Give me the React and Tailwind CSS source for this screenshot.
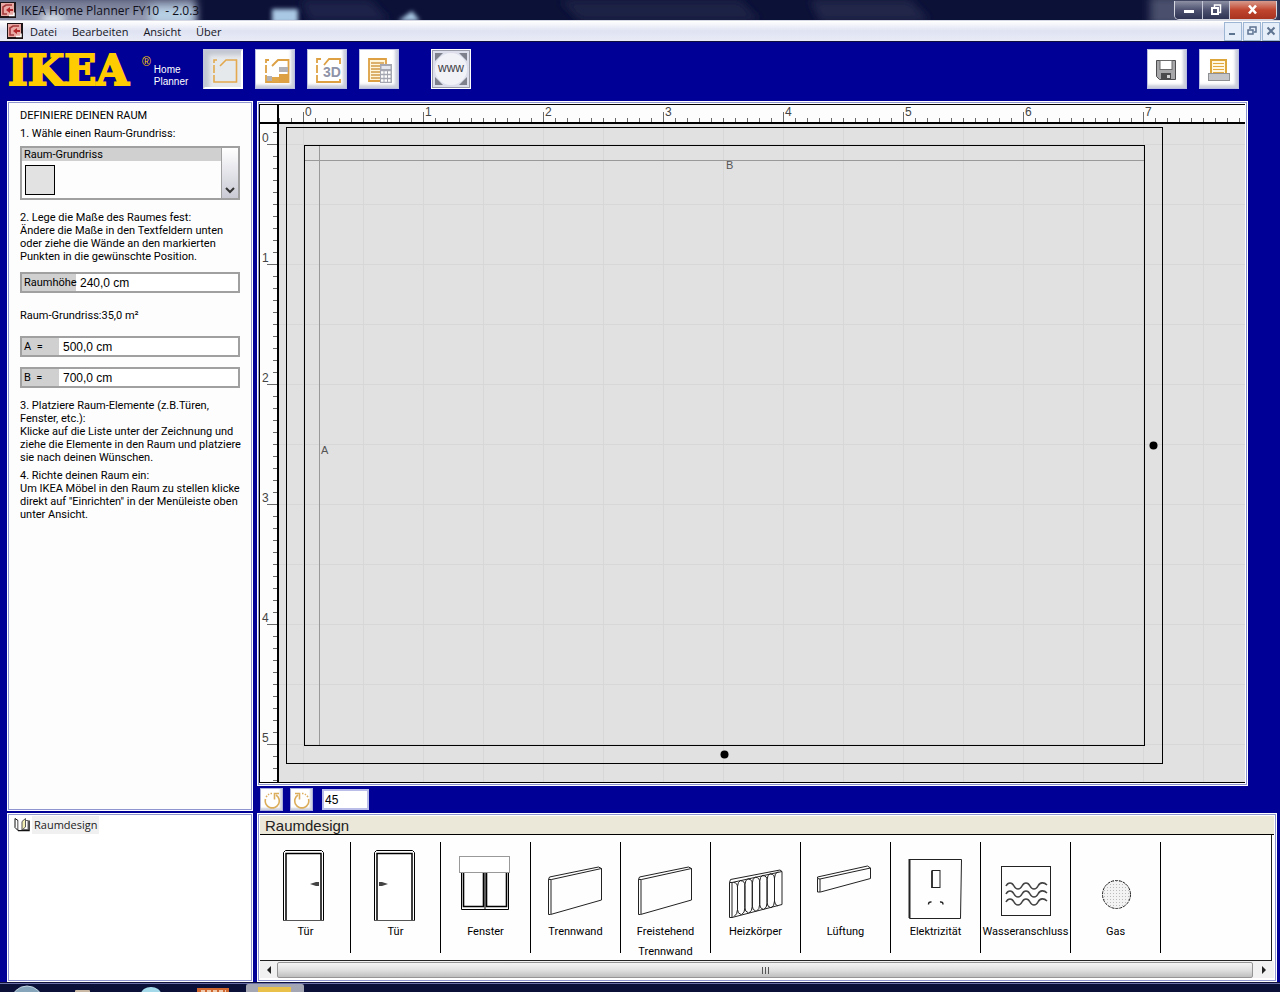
import React, { useState } from "react";

const PANEL = "border border-white bg-[#8f96cf] p-px";
const METRES = [0, 1, 2, 3, 4, 5, 6, 7];

function AppIcon() {
  return (
    <svg width="16" height="16" viewBox="0 0 16 16" className="shrink-0" aria-hidden="true">
      <rect width="16" height="16" fill="#1c1416" />
      <rect x="1" y="1" width="13" height="13" fill="#e9a9a4" />
      <path d="M12 3H6L3 5v7h4" fill="none" stroke="#a3383a" strokeWidth="1.600" />
      <path d="M6 8l4-3v2h3v2h-3v2z" fill="#b3282b" />
      <path d="M9 13.500h5v-3" fill="none" stroke="#fff" strokeWidth="1.500" />
    </svg>
  );
}

function TitleBar() {
  return (
    <header className="relative flex h-[21px] shrink-0 items-center overflow-hidden border-b border-[#d5d7e2] bg-[#0c1137]">
      <svg className="absolute inset-0 h-full w-full" aria-hidden="true">
        <defs>
          <filter id="soft" x="-50%" y="-50%" width="200%" height="200%">
            <feGaussianBlur stdDeviation="4" />
          </filter>
          <filter id="soft2" x="-50%" y="-50%" width="200%" height="200%">
            <feGaussianBlur stdDeviation="2" />
          </filter>
          <linearGradient id="glass" x1="0" y1="0" x2="0" y2="1">
            <stop offset="0" stopColor="#686d88" />
            <stop offset="1" stopColor="#a3a9bf" />
          </linearGradient>
        </defs>
        <rect x="-10" y="-4" width="206" height="30" fill="url(#glass)" filter="url(#soft)" />
        <rect x="42" y="14" width="22" height="10" fill="#e2ebf2" filter="url(#soft)" />
        <rect x="150" y="6" width="44" height="18" fill="#b7d0e4" filter="url(#soft)" />
        <path d="M300 0h70l20 21h-80z" fill="#1c2248" filter="url(#soft)" />
        <path d="M560 0h180l20 21H580z" fill="#1b2044" filter="url(#soft)" />
        <path d="M810 0h100l20 21H820z" fill="#20254a" filter="url(#soft)" />
        <rect x="1150" y="-4" width="130" height="30" fill="#4a4f6c" filter="url(#soft)" />
        <rect x="272" y="9" width="26" height="14" fill="#a9c8e3" filter="url(#soft2)" />
        <path d="M398 21l14-10 8 10z" fill="#a9c8e3" filter="url(#soft2)" />
      </svg>
      <div className="relative flex w-full items-center">
        <AppIcon />
        <h1 className="ml-[5px] whitespace-pre pt-px font-['Open_Sans','Noto_Sans',sans-serif] text-[12px] leading-[18px] text-[#10101c]">
          IKEA Home Planner FY10  - 2.0.3
        </h1>
        <div className="mr-[3px] ml-auto flex h-[19px] self-start overflow-hidden rounded-b-[5px] border border-t-0 border-[#d4d6e0]">
          <button aria-label="Minimieren" className="flex w-[28px] items-center justify-center border-r border-[#c5c8d6] bg-linear-to-b from-[#8e91a4] via-[#4e5270] to-[#2f3454]">
            <svg width="12" height="12" aria-hidden="true"><rect x="1" y="6" width="10" height="3" fill="#fff" /></svg>
          </button>
          <button aria-label="Wiederherstellen" className="flex w-[27px] items-center justify-center border-r border-[#c5c8d6] bg-linear-to-b from-[#8e91a4] via-[#4e5270] to-[#2f3454]">
            <svg width="12" height="12" fill="none" stroke="#fff" aria-hidden="true">
              <path d="M4.500 3v-2h6v7.500h-2" strokeWidth="1.500" /><rect x="2" y="4" width="6" height="6" strokeWidth="2" />
            </svg>
          </button>
          <button aria-label="Schließen" className="flex w-[46px] items-center justify-center bg-linear-to-b from-[#d79a8c] via-[#c0452e] to-[#a8341f]">
            <svg width="12" height="12" aria-hidden="true"><path d="M2 1.500l7 8M9 1.500l-7 8" stroke="#fff" strokeWidth="2.600" /></svg>
          </button>
        </div>
      </div>
    </header>
  );
}

function MdiButton({ label, children }) {
  return (
    <button aria-label={label} className="flex h-[19px] w-[18px] items-center justify-center border border-[#9db6d4] bg-[#e6eef9]">
      <svg width="12" height="12" fill="none" stroke="#5d7390" strokeWidth="2" aria-hidden="true">{children}</svg>
    </button>
  );
}

function MenuBar() {
  return (
    <nav className="flex h-[21px] shrink-0 items-center border-b border-[#10103c] bg-linear-to-b from-white via-[#dfe3f2] to-[#e9ebf6] pl-[7px]">
      <AppIcon />
      <ul className="ml-[7px] flex gap-[15px] pt-px font-['Open_Sans','Noto_Sans',sans-serif] text-[11px] leading-[18px] text-[#14141e]">
        {["Datei", "Bearbeiten", "Ansicht", "Über"].map((m) => (
          <li key={m}><button>{m}</button></li>
        ))}
      </ul>
      <div className="ml-auto flex gap-px">
        <MdiButton label="Dokument minimieren"><path d="M2 9h6" /></MdiButton>
        <MdiButton label="Dokument wiederherstellen"><path d="M4 4V2h6v5H8" strokeWidth="1.500" /><rect x="2" y="5" width="5" height="4" strokeWidth="1.500" /></MdiButton>
        <MdiButton label="Dokument schließen"><path d="M2.500 2.500l7 7M9.500 2.500l-7 7" /></MdiButton>
      </div>
    </nav>
  );
}

function ToolButton({ label, pressed, children }) {
  return (
    <button
      aria-label={label}
      aria-pressed={pressed}
      className={
        pressed
          ? "h-[40px] w-[40px] border-2 border-[#c3c7d8] border-r-white border-b-white bg-[#e6e9ec] shadow-[inset_4px_4px_4px_#c2c6d0]"
          : "h-[40px] w-[40px] border border-[#b9bde0] bg-white shadow-[inset_-3px_-3px_3px_#c9ccda,inset_2px_2px_1px_#ffffff]"
      }
    >
      <svg width="36" height="36" viewBox="0 0 36 36" className="mx-auto block" aria-hidden="true">{children}</svg>
    </button>
  );
}

const ROOM_OUTLINE = "M12 9H9v3M9 14v8M9 24v7h22.500V9H21l-6 6";

function Toolbar() {
  return (
    <div className="flex h-[59px] shrink-0 items-start pt-[7px] pr-[41px] pl-[7px]">
      <div className="flex w-[196px] shrink-0 items-start">
        <span className="w-[135px] pl-px font-['DejaVu_Serif',serif] text-[42px] leading-[44px] font-bold text-[#ffcc00] [-webkit-text-stroke:2px_#ffcc00]">IKEA</span>
        <span className="mt-[7px] font-['Liberation_Sans',sans-serif] text-[12px] leading-[12px] text-[#ffcc00]">®</span>
        <span className="mt-[15px] ml-[3px] font-['Liberation_Sans',sans-serif] text-[10px] leading-[12px] text-white">Home<br />Planner</span>
      </div>
      <div className="flex gap-[12px]">
        <ToolButton label="Raum definieren" pressed>
          <path d={ROOM_OUTLINE} fill="none" stroke="#e2a94e" strokeWidth="1.600" />
        </ToolButton>
        <ToolButton label="Einrichten">
          <path d={ROOM_OUTLINE} fill="none" stroke="#dda043" strokeWidth="1.800" />
          <rect x="22" y="16" width="9" height="5" fill="#b2b2b6" />
          <rect x="22" y="23" width="9" height="8" fill="#dda043" />
          <rect x="15" y="26" width="7" height="5" fill="#e0a64a" />
          <rect x="10" y="25" width="5" height="5" fill="#b2b2b6" />
        </ToolButton>
        <ToolButton label="3D-Ansicht">
          <path d="M12 8H8v4M8 14v8M8 24v7h23v-3M31 13V8H20l-5 6" fill="none" stroke="#dda043" strokeWidth="1.800" />
          <text x="14" y="26" fontFamily="Liberation Sans, sans-serif" fontWeight="700" fontSize="14" fill="#8e93a8">3D</text>
        </ToolButton>
        <ToolButton label="Artikelliste">
          <path d="M8 8h17v22H8z" fill="#fff6dc" stroke="#dda043" strokeWidth="1.800" />
          <path d="M10 12h13M10 15h13M10 18h9M10 21h9M10 24h9M10 27h9" stroke="#cf9a45" strokeWidth="1.500" />
          <rect x="19" y="13" width="12" height="19" fill="#a4a7b2" />
          <path d="M20.500 15h9v3h-9z" fill="#e4e6ee" />
          <path d="M20 21.500h10M20 25.500h10M20 29.500h10" stroke="#fff" strokeWidth="2.500" strokeDasharray="2.500 1" />
        </ToolButton>
      </div>
      <button aria-label="www" className="ml-[32px] flex h-[40px] w-[40px] border-2 border-[#9a9da8] bg-[#dfe2ee] outline outline-1 -outline-offset-1 outline-white">
        <svg width="36" height="36" viewBox="0 0 36 36" aria-hidden="true">
          <rect width="36" height="36" fill="#dde0ec" />
          <circle cx="18" cy="18" r="16" fill="#f1f2f8" />
          <path d="M2 2h8L2 10zM34 2h-8l8 8zM2 34h8l-8-8zM34 34h-8l8-8z" fill="#7e818c" />
          <text x="18" y="21" textAnchor="middle" fontFamily="Liberation Sans, sans-serif" fontSize="12" fill="#3c3c44">www</text>
        </svg>
      </button>
      <div className="ml-auto flex gap-[12px]">
        <ToolButton label="Speichern">
          <path d="M7.500 9.500h19v19h-16l-3-3z" fill="#a7a7a9" stroke="#4d4d50" />
          <rect x="11" y="9.500" width="12" height="9" fill="#fff" stroke="#6a6a6c" />
          <rect x="12" y="22" width="10" height="6" fill="#4b4b4e" />
          <rect x="18" y="24" width="3" height="3" fill="#d5d5d5" />
        </ToolButton>
        <ToolButton label="Drucken">
          <rect x="10" y="9" width="15" height="14" fill="#fff7df" stroke="#dca63a" strokeWidth="2" />
          <path d="M12 12.500h11M12 15.500h11M12 18.500h11M12 21.500h11" stroke="#e2a940" />
          <rect x="7.500" y="22.500" width="21" height="7" fill="#c4c5c8" stroke="#8f9094" />
        </ToolButton>
      </div>
    </div>
  );
}

function Field({ id, label, value, wide, className }) {
  return (
    <div className={`flex h-[21px] items-stretch border-2 border-[#a0a0a0] bg-white ${className}`}>
      <label htmlFor={id} className={wide ? "w-[54px] bg-[#d0d0d0] pl-[2px] leading-[18px] whitespace-pre" : "w-[37px] bg-[#d0d0d0] pl-[2px] leading-[18px] whitespace-pre"}>{label}</label>
      <input id={id} defaultValue={value} className="min-w-0 flex-1 bg-transparent pt-px pl-[4px] font-['Liberation_Sans',Arial,sans-serif] text-[12px] leading-[16px] outline-none" />
    </div>
  );
}

function DefinePanel() {
  return (
    <section className={`flex min-h-0 flex-1 ${PANEL}`}>
      <div className="min-w-0 flex-1 bg-[#fdfdfd] pt-[6px] pr-[11px] pl-[11px] font-[Roboto,'Liberation_Sans',sans-serif] text-[11px] leading-[13px] whitespace-nowrap text-black">
        <h2>DEFINIERE DEINEN RAUM</h2>
        <p className="mt-[5px]">1. Wähle einen Raum-Grundriss:</p>
        <div className="mt-[6px] flex h-[54px] border-2 border-[#a0a0a0] bg-[#fdfdfd]">
          <div className="flex-1">
            <p className="bg-[#d0d0d0] pl-[2px]">Raum-Grundriss</p>
            <button aria-label="Rechteckiger Raum" className="mt-[4px] ml-[3px] block h-[30px] w-[30px] border border-black bg-[#e2e2e2]" />
          </div>
          <button aria-label="Weitere Grundrisse" className="flex w-[17px] items-end justify-center border-l border-[#a0a0a0] bg-linear-to-b from-white to-[#c9cad4] pb-[4px]">
            <svg width="10" height="8" aria-hidden="true"><path d="M1 2l4 4 4-4" fill="none" stroke="#333" strokeWidth="2" /></svg>
          </button>
        </div>
        <p className="mt-[11px]">2. Lege die Maße des Raumes fest:<br />Ändere die Maße in den Textfeldern unten<br />oder ziehe die Wände an den markierten<br />Punkten in die gewünschte Position.</p>
        <Field id="height" label="Raumhöhe" value="240,0 cm" wide className="mt-[9px]" />
        <p className="mt-[16px]">Raum-Grundriss:35,0 m²</p>
        <Field id="side-a" label="A  =" value="500,0 cm" className="mt-[14px]" />
        <Field id="side-b" label="B  =" value="700,0 cm" className="mt-[10px]" />
        <p className="mt-[11px]">3. Platziere Raum-Elemente (z.B.Türen,<br />Fenster, etc.):<br />Klicke auf die Liste unter der Zeichnung und<br />ziehe die Elemente in den Raum und platziere<br />sie nach deinen Wünschen.</p>
        <p className="mt-[5px]">4. Richte deinen Raum ein:<br />Um IKEA Möbel in den Raum zu stellen klicke<br />direkt auf "Einrichten" in der Menüleiste oben<br />unter Ansicht.</p>
      </div>
    </section>
  );
}

function TreePanel() {
  return (
    <section className={`flex h-[169px] shrink-0 ${PANEL}`}>
      <div className="flex-1 bg-white pt-px pl-[5px]">
        <button className="flex items-center gap-[2px]">
          <svg width="16" height="16" viewBox="0 0 16 16" aria-hidden="true">
            <path d="M1 1.500l3 2v10l-3-3z" fill="#fff" stroke="#111" />
            <path d="M4 13.500h11V3.500" fill="none" stroke="#111" strokeWidth="1.500" />
            <path d="M4.500 3.500h3v9.500h-3z" fill="#fff" />
            <path d="M8 13V4.500l3.500-3V10z" fill="#f3eeb4" stroke="#555" />
            <path d="M12 3.500h2v9H9" fill="none" stroke="#666" />
          </svg>
          <span className="bg-[#f0f0f0] px-[2px] font-['Open_Sans','Noto_Sans',sans-serif] text-[11px] leading-[18px] text-[#222]">Raumdesign</span>
        </button>
      </div>
    </section>
  );
}

/* Floor plan, 120 px per metre; the room's origin lies at (45, 41). */
function Plan() {
  const ticks = Array.from({ length: 200 }, (_, i) => i - 2);
  return (
    <svg className="block h-full w-full bg-[#e1e1e1]" shapeRendering="crispEdges" role="img" aria-label="Raumzeichnung">
      <defs>
        <pattern id="grid" x="44" y="40" width="60" height="60" patternUnits="userSpaceOnUse">
          <path d="M.5 0v60M0 .5h60" stroke="#d7d7d7" />
        </pattern>
      </defs>
      <rect width="100%" height="100%" fill="url(#grid)" />
      <rect width="100%" height="18" fill="#fdfdfd" />
      <rect width="18" height="100%" fill="#fdfdfd" />
      <g stroke="#6a6a6a">
        {ticks.map((t) => <line key={`h${t}`} x1={44.5 + t * 12} x2={44.5 + t * 12} y1={t % 10 ? 14 : 8} y2="18" />)}
        {ticks.map((t) => <line key={`v${t}`} y1={40.5 + t * 12} y2={40.5 + t * 12} x1={t % 10 ? 14 : 8} x2="18" />)}
      </g>
      <rect width="20" height="18" fill="#fdfdfd" />
      <g fontFamily="Liberation Sans, sans-serif" fontSize="12" fill="#444">
        {METRES.map((m) => <text key={m} x={46 + m * 120} y="12">{m}</text>)}
        {METRES.slice(0, 6).map((m) => <text key={m} x="3" y={38 + m * 120}>{m}</text>)}
      </g>
      <rect y="18" width="100%" height="2" />
      <rect x="18" width="2" height="100%" />
      <rect width="100%" height="1" />
      <rect width="1" height="100%" />
      <path d="M60.5 42v599M46 56.500h839" stroke="#999" />
      <rect x="27.500" y="23.500" width="876" height="636" fill="none" stroke="#000" />
      <rect x="45.500" y="41.500" width="840" height="600" fill="none" stroke="#000" />
      <g shapeRendering="auto">
        <circle cx="894.500" cy="341.500" r="4" />
        <circle cx="465.500" cy="650.500" r="4" />
      </g>
      <g fontFamily="Liberation Sans, sans-serif" fontSize="11" fill="#555">
        <text x="62" y="350">A</text>
        <text x="467" y="65">B</text>
      </g>
    </svg>
  );
}

function RotateButton({ label, mirrored }) {
  return (
    <button aria-label={label} className="flex h-[23px] w-[23px] items-center justify-center border border-[#a9adda] bg-white shadow-[inset_-2px_-2px_2px_#cfd1de]">
      <svg width="18" height="18" viewBox="0 0 18 18" fill="none" stroke="#dcae5c" strokeWidth="1.600" aria-hidden="true">
        <g transform={mirrored ? "translate(18 0) scale(-1 1)" : undefined}>
          <path d="M13 4A7 7 0 1 1 2.500 8" /><path d="M16 2.500h-4.500v6" /><path d="M3 6l3-3M7.500 2.500h2" strokeDasharray="1.500 1.500" />
        </g>
      </svg>
    </button>
  );
}

const door = (
  <>
    <path d="M22.500 78.500v-68l2-2h36l2 2v68" fill="#fff" stroke="#000" />
    <path d="M25 78V11.500h35V78" fill="none" stroke="#000" strokeWidth="1.500" />
    <path d="M22 78.500h41" stroke="#555" />
  </>
);
const wall = (
  <g fill="none" stroke="#222">
    <path d="M17.500 37.500l1-2.500 49-10 3 1.500V58l-51 14.500h-2zM20 37.500V72M17.500 37.500h3l50-11" strokeLinejoin="round" />
  </g>
);

const ITEMS = [
  { label: "Tür", art: <>{door}<path d="M49 42l6-2h3v4h-3z" fill="#444" /></> },
  { label: "Tür", art: <><g transform="translate(1 0)">{door}</g><path d="M37 42l-6-2h-3v4h3z" fill="#444" /></> },
  {
    label: "Fenster",
    art: (
      <g fill="none" stroke="#000">
        <path d="M20.500 30v37.500h47V30" />
        <path d="M22.500 30v34.500h20V30M45.500 30v34.500h20V30" strokeWidth="1.600" />
        <path d="M44 30v37" />
        <rect x="18.500" y="14.500" width="50" height="16" fill="#fff" stroke="#999" />
      </g>
    ),
  },
  { label: "Trennwand", art: wall },
  { label: "Freistehend Trennwand", art: wall },
  {
    label: "Heizkörper",
    art: (
      <g fill="none" stroke="#222">
        <path d="M18.500 40.500l1-3L69 28l2 1.500v33l-50 13h-2.500zM21 40.500v35M18.500 40.500h2.500l50-11" />
        {[0, 1, 2, 3, 4, 5].map((i) => (
          <path key={i} d={`M${22.5 + i * 7.4} ${40.5 - i * 1.7}q4 0 4 5v${22}q0 5-3.500 7m7-36.500q-3.500 2-3.500 6.500v${23}q0 4 3.500 5`} />
        ))}
      </g>
    ),
  },
  { label: "Lüftung", art: <path d="M16.500 36.500v-1.500l50-11 3 2v10.500l-50 13.500h-3zM19 37v13M16.500 36.500l2.500.5 50.500-11" fill="none" stroke="#222" /> },
  {
    label: "Elektrizität",
    art: (
      <g fill="none" stroke="#222">
        <path d="M18.500 17.500h52l-1 59h-51z" /><path d="M18.500 17v59" strokeWidth="2" />
        <rect x="41" y="28.500" width="8" height="17" /><path d="M41 29v17" strokeWidth="1.600" />
        <path d="M37.500 62.500q0-3 3-2.500M49 60q3-.5 3 2.500" strokeWidth="1.400" />
      </g>
    ),
  },
  {
    label: "Wasseranschluss",
    art: (
      <g fill="none" stroke="#222">
        <rect x="20.500" y="24.500" width="49" height="49" />
        {[42, 50, 58].map((y) => (
          <path key={y} d={`M25 ${y + 2}c2-4 6-4 8 0s6 4 8 0s6-4 8 0s6 4 8 0s6-4 9-1`} stroke="#444" strokeWidth="1.600" />
        ))}
      </g>
    ),
  },
  {
    label: "Gas",
    art: (
      <>
        <defs><pattern id="dots" width="3" height="3" patternUnits="userSpaceOnUse"><rect width="1" height="1" fill="#bbb" /></pattern></defs>
        <circle cx="45.500" cy="52.500" r="14" fill="#f3f3f3" />
        <circle cx="45.500" cy="52.500" r="14" fill="url(#dots)" stroke="#222" strokeDasharray="3 1" />
      </>
    ),
  },
];

function Catalog() {
  return (
    <section className={`flex h-[169px] shrink-0 ${PANEL}`}>
      <div className="flex min-w-0 flex-1 flex-col bg-white px-px pt-px pb-[2px]">
        <h2 className="h-[19px] shrink-0 border-b border-black bg-[#ebe7d9] pl-[5px] text-[15px] leading-[19px] text-[#222]">Raumdesign</h2>
        <ul className="mr-[2px] flex min-h-0 flex-1 overflow-hidden border-r border-b border-[#222] bg-[#fefefe] pt-[7px] pl-px">
          {ITEMS.map((it, i) => (
            <li key={i} className="h-[111px] w-[90px] shrink-0 border-r border-black">
              <button className="flex w-full flex-col items-center font-[Roboto,'Liberation_Sans',sans-serif] text-[11px] leading-[20px] text-black">
                <svg width="89" height="80" viewBox="0 0 89 80" aria-hidden="true">{it.art}</svg>
                <span>{it.label}</span>
              </button>
            </li>
          ))}
        </ul>
        <div className="flex h-[17px] shrink-0 items-stretch bg-[#f1f1f1] pt-px">
          <button aria-label="Nach links" className="flex w-[17px] items-center justify-center">
            <svg width="6" height="8" aria-hidden="true"><path d="M5 0v8L1 4z" fill="#222" /></svg>
          </button>
          <div className="flex flex-1 items-center justify-center gap-[2px] rounded-[2px] border border-[#959595] bg-linear-to-b from-[#f4f4f4] via-[#e0e0e0] to-[#bfbfbf]">
            {[0, 1, 2].map((i) => <span key={i} className="h-[7px] w-px bg-[#555]" />)}
          </div>
          <button aria-label="Nach rechts" className="flex w-[21px] items-center justify-center">
            <svg width="6" height="8" aria-hidden="true"><path d="M1 0v8l4-4z" fill="#222" /></svg>
          </button>
        </div>
      </div>
    </section>
  );
}

function Taskbar() {
  return (
    <footer className="h-[10px] shrink-0 border-t border-[#10103c] bg-[#0b1038]">
      <svg className="block h-[9px] w-full border-t border-[#6d72a8]" aria-hidden="true">
        <circle cx="27" cy="18" r="16" fill="#86a5bb" stroke="#c3d6e2" />
        <rect x="75" y="6" width="15" height="6" rx="1" fill="#c9b9a4" />
        <ellipse cx="151" cy="10" rx="10" ry="7" fill="#a4d9ea" />
        <rect x="197" y="4" width="32" height="8" fill="#d0672f" />
        <path d="M201 7h25" stroke="#f0c9ab" strokeWidth="2" strokeDasharray="4 2" />
        <rect x="246" y="0" width="58" height="12" rx="2" fill="#a4a6b4" />
        <rect x="258" y="3" width="33" height="8" fill="#e9c04a" />
      </svg>
    </footer>
  );
}

export default function App() {
  const [angle, setAngle] = useState("45");
  return (
    <div className="flex min-h-screen flex-col bg-[#000096] font-['Liberation_Sans',Arial,sans-serif]">
      <TitleBar />
      <MenuBar />
      <Toolbar />
      <main className="flex flex-1 gap-[4px] pr-[3px] pl-[7px]">
        <aside className="flex w-[246px] shrink-0 flex-col gap-[2px]">
          <DefinePanel />
          <TreePanel />
        </aside>
        <div className="flex min-w-0 flex-1 flex-col">
          <section className={`mr-[29px] flex min-h-0 flex-1 ${PANEL}`}>
            <div className="min-w-0 flex-1 bg-white pt-px pr-px pb-px">
              <div className="h-full border-b border-black"><Plan /></div>
            </div>
          </section>
          <div className="flex h-[27px] shrink-0 items-center pl-[3px]">
            <RotateButton label="Nach links drehen" />
            <div className="w-[7px]" />
            <RotateButton label="Nach rechts drehen" mirrored />
            <input aria-label="Drehwinkel" value={angle} onChange={(e) => setAngle(e.target.value)} className="ml-[9px] h-[21px] w-[47px] border-2 border-[#b9bde8] bg-white pl-px text-[12px] text-black outline-none" />
          </div>
          <Catalog />
        </div>
      </main>
      <Taskbar />
    </div>
  );
}
